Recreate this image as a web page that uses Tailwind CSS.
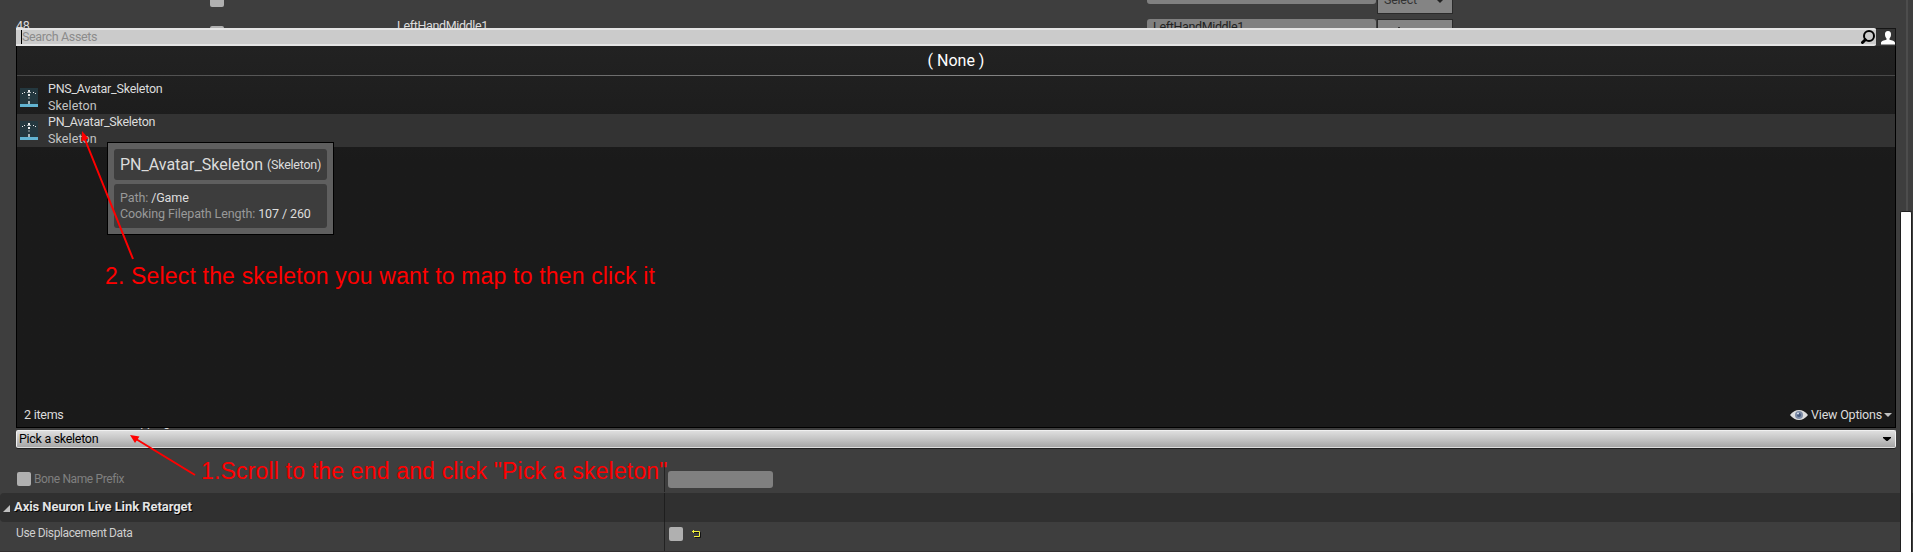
<!DOCTYPE html>
<html lang="en">
<head>
<meta charset="utf-8">
<title>Skeleton picker</title>
<script src="https://cdn.jsdelivr.net/npm/@tailwindcss/browser@4"></script>
</head>
<body class="bg-[#3e3e3e]">
<div class="relative flex h-[552px] w-[1913px] overflow-hidden bg-[#3e3e3e] font-['Roboto',sans-serif] text-[12.5px] leading-4 tracking-[-0.25px] text-[#dcdcdc] whitespace-nowrap">
  <!-- Details panel -->
  <main class="flex w-[1900px] flex-col">
    <div class="flex h-[17px] items-start overflow-hidden">
      <span class="ml-[210px] h-[7px] w-3.5 rounded-b-[2px] bg-[#b0b0b0]"></span>
      <span class="ml-[923px] h-1 w-[229px] rounded-b-[3px] bg-[#808080]"></span>
      <span class="ml-px flex h-3.5 w-[76px] items-start justify-between border border-t-0 border-[#2a2a2a] bg-[#848484] pr-2 pl-1.5 text-[#333]">
        <span class="-mt-2 h-4">Select</span>
        <svg class="h-[3px] w-2" viewBox="0 0 8 3"><path d="M1 0h6L4 3z" fill="#222"/></svg>
      </span>
    </div>
    <div class="mt-0.5 flex h-[9px] items-start overflow-hidden">
      <span class="-mt-px ml-4 w-[194px]">48</span>
      <span class="mt-[7px] h-3.5 w-3.5 rounded-[2px] bg-[#b0b0b0]"></span>
      <span class="-mt-px ml-[173px] w-[750px] tracking-[-0.35px]">LeftHandMiddle1</span>
      <span class="h-[17px] w-[229px] rounded-[3px] bg-[#808080] pl-1.5 tracking-[-0.35px] text-[#222]">LeftHandMiddle1</span>
      <span class="ml-px h-[17px] w-[76px] border border-[#2a2a2a] bg-[#848484]"><span class="mt-[7px] ml-[20px] block h-1 w-0.5 bg-[#333]"></span></span>
    </div>
    <div class="mt-[386px] flex h-4 items-end pl-[123px]"><span class="h-4">Mapping</span></div>
    <button class="z-10 ml-4 flex h-[18px] w-[1880px] shrink-0 items-center justify-between rounded-[2px] border border-[#f0f0f0] border-b-[#ddd] bg-linear-to-b from-[#dedede] via-[#c4c4c4] to-[#a6a6a6] pr-1 pl-0.5 text-black shadow-[0_1px_0_#202020]">
      <span class="tracking-[-0.3px]">Pick a skeleton</span>
      <svg class="h-1 w-2" viewBox="0 0 8 4"><path d="M0 0h8v1L4.500 4h-1L0 1z"/></svg>
    </button>
    <div class="mt-[15px] flex h-[30px] items-center pt-0.5">
      <span class="ml-[17px] h-3.5 w-3.5 rounded-[2px] bg-[#b0b0b0]"></span>
      <span class="ml-[3px] w-[630px] text-[12px] tracking-[-0.38px] text-[#808080]">Bone Name Prefix</span>
      <span class="h-[25px] w-px bg-[#222]"></span>
      <span class="ml-[3px] h-[17px] w-[105px] rounded-[3px] bg-[#808080]"></span>
    </div>
    <div class="flex h-[29px] w-[1913px] items-center rounded-l bg-[#303030]">
      <svg class="mt-0.5 ml-[3px] h-[7px] w-[7px]" viewBox="0 0 7 7"><path d="M7 0v7H0z" fill="#c0c0c0"/></svg>
      <h2 class="ml-1 w-[650px] pb-px text-[13px] font-bold tracking-[-0.07px] text-[#e4e4e4] [text-shadow:1px_1px_0_#000]">Axis Neuron Live Link Retarget</h2>
      <span class="h-[29px] w-px bg-[#1e1e1e]"></span>
    </div>
    <div class="flex h-[29px] items-start">
      <span class="mt-[3px] ml-4 w-[648px] text-[12px] tracking-[-0.38px] text-[#cfcfcf]">Use Displacement Data</span>
      <span class="h-[29px] w-px bg-[#222]"></span>
      <span class="mt-[5px] ml-1 h-3.5 w-3.5 rounded-[2px] bg-[#b0b0b0]"></span>
      <svg class="mt-2 ml-[9px] h-[9px] w-[9px]" viewBox="0 0 9 9" fill="none"><path d="M2 2.500h6.500v5H3" stroke="#111"/><path d="M0 1.500h7.500v5H2M1.500 0v3" stroke="#f4f43c"/></svg>
    </div>
    <div class="h-px w-full bg-[#332f30]"></div>
  </main>
  <!-- Scrollbar -->
  <aside class="flex w-[12px] flex-col items-center">
    <span class="h-[211px] w-px translate-x-[0.5px] bg-[#5c5c5c]"></span>
    <span class="z-10 w-[12px] flex-1 rounded-t-[2px] border border-b-0 border-[#202020] bg-white"></span>
  </aside>

  <!-- Asset picker popup -->
  <section class="absolute top-7 left-4 flex h-[400px] w-[1880px] flex-col">
    <div class="flex h-[18px]">
      <div class="flex w-[1860px] items-center justify-between rounded-r-[2px] border-y-2 border-[#e4e4e4] bg-[#cbcbcb] pr-px">
        <span class="ml-[5px] flex h-3.5 items-center border-l border-black tracking-[-0.35px] text-[#8c8c8c]">Search Assets</span>
        <svg class="h-3.5 w-3.5" viewBox="0 0 14 14" fill="none" stroke="#000"><circle cx="8" cy="6" r="5" stroke-width="2"/><path d="M4.300 9.700L1.500 12.500" stroke-width="3" stroke-linecap="round"/></svg>
      </div>
      <div class="flex flex-1 items-center justify-center border-t border-r border-[#161616] bg-[#343434] pl-1">
        <svg class="h-3.5 w-3.5" viewBox="0 0 14 14" fill="#fff"><path d="M7 0C4.800 0 3.800 1.500 4 3.800 4.100 5.500 4.800 6.800 5.500 7.500V8.800C3 9.400 0 10 0 12v1.500h14V12c0-2-3-2.600-5.500-3.200V7.500C9.200 6.800 9.900 5.500 10 3.800 10.200 1.500 9.200 0 7 0z"/></svg>
      </div>
    </div>
    <div class="flex flex-1 flex-col border border-t-0 border-black bg-linear-to-b from-[#222] via-[#1a1a1a] via-30% to-[#1a1a1a]">
      <div class="flex h-[29px] items-center justify-center text-[16px] tracking-normal text-white">( None )</div>
      <div class="h-px bg-linear-to-r from-[#484848] via-[#858585] to-[#484848]"></div>
      <div class="mt-[5px] flex h-[33px] items-start pl-[3px]">
        <svg class="mt-[7px] h-[19px] w-[18px]" viewBox="0 0 18 19"><path fill="#24383f" d="M0 0h18v19H0z"/><path fill="#62b4d2" d="M0 16h18v3H0z"/><path fill="#a9b3b6" d="M7 4h4v1H7zM8.500 9h1v2h-1zM8 13h2v3H8z"/><path fill="#eee" d="M8 2h2v2H8zM2 5h1v1H2zM4 4h1v1H4zM13 4h1v1h-1zM15 5h1v1h-1zM8 6h2v2H8z"/></svg>
        <div class="-mt-px ml-2.5 flex flex-col leading-[17px]"><span>PNS_Avatar_Skeleton</span><span class="tracking-[0.1px] text-[#c4c4c4]">Skeleton</span></div>
      </div>
      <div class="flex h-[33px] items-start bg-[#333] pl-[3px]">
        <svg class="mt-[7px] h-[19px] w-[18px]" viewBox="0 0 18 19"><path fill="#24383f" d="M0 0h18v19H0z"/><path fill="#62b4d2" d="M0 16h18v3H0z"/><path fill="#a9b3b6" d="M7 4h4v1H7zM8.500 9h1v2h-1zM8 13h2v3H8z"/><path fill="#eee" d="M8 2h2v2H8zM2 5h1v1H2zM4 4h1v1H4zM13 4h1v1h-1zM15 5h1v1h-1zM8 6h2v2H8z"/></svg>
        <div class="-mt-px ml-2.5 flex flex-col leading-[17px]"><span>PN_Avatar_Skeleton</span><span class="tracking-[0.1px] text-[#c4c4c4]">Skeleton</span></div>
      </div>
      <div class="mt-auto mb-1 flex h-4 items-center pl-[7px] pr-[3px]">
        <span>2 items</span>
        <svg class="ml-auto h-2.5 w-[18px]" viewBox="0 0 18 10"><path d="M0 5Q4 0 9 0T18 5Q14 10 9 10T0 5z" fill="#dedede"/><circle cx="9" cy="5" r="4" fill="#7f8da6"/><circle cx="9" cy="5" r="2" fill="#46597c"/><circle cx="8" cy="3.500" r="1" fill="#dce4f0"/></svg>
        <span class="ml-[3px] tracking-[-0.2px]">View Options</span>
        <svg class="ml-0.5 h-1 w-2" viewBox="0 0 8 4"><path d="M0 0h8L4 4z" fill="#c0c0c0"/></svg>
      </div>
    </div>
  </section>

  <!-- Tooltip -->
  <div class="absolute top-[142px] left-[107px] flex h-[93px] w-[227px] flex-col gap-1 border border-black bg-[#5f5f5f] p-1.5">
    <div class="flex h-[31px] items-center rounded-[3px] bg-[#3d3d3d] pl-1.5">
      <span class="w-[147px] text-[16px] tracking-normal">PN_Avatar_Skeleton</span><span>(Skeleton)</span>
    </div>
    <div class="flex h-11 flex-col justify-center rounded-[3px] bg-[#3d3d3d] pl-1.5 tracking-[-0.1px]">
      <span class="text-[#999]">Path: <span class="text-[#dedede]">/Game</span></span>
      <span class="text-[#999]">Cooking Filepath Length: <span class="text-[#dedede]">107 / 260</span></span>
    </div>
  </div>

  <!-- Annotations -->
  <svg class="absolute inset-0 z-20 h-[552px] w-[1913px]" viewBox="0 0 1913 552" fill="#f00" stroke="#f00">
    <path d="M133 259L84 137M195 475L136 439" stroke-width="2"/>
    <path d="M82 131L88.500 138.500 81.500 141.500zM130 435L139.500 436.500 135 443z" stroke="none"/>
  </svg>
  <p class="absolute top-[263px] left-[105px] z-20 font-['Liberation_Sans',sans-serif] text-[23px] leading-[26px] tracking-[0.17px] text-[#f00]">2. Select the skeleton you want to map to then click it</p>
  <p class="absolute top-[458px] left-[201px] z-20 font-['Liberation_Sans',sans-serif] text-[23px] leading-[26px] tracking-[0.17px] text-[#f00]">1.Scroll to the end and click "Pick a skeleton"</p>
</div>
</body>
</html>
